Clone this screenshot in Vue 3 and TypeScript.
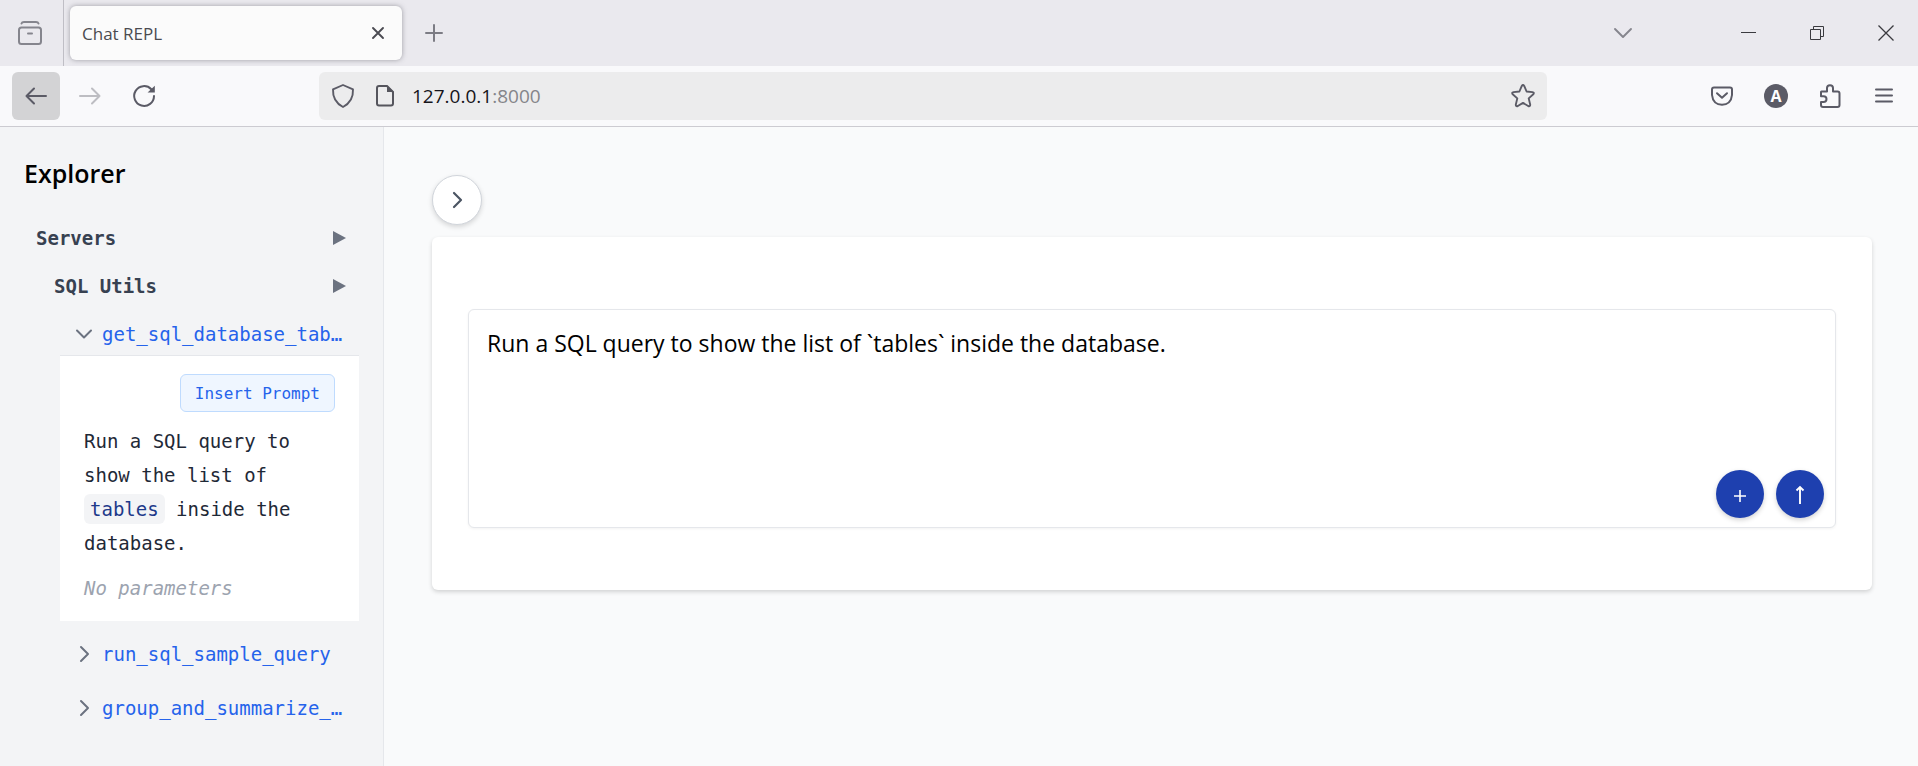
<script setup lang="ts">
import { ref } from 'vue'

interface Tool {
  name: string
  open: boolean
}

const promptText = 'Run a SQL query to show the list of `tables` inside the database.'
const draft = ref<string>(promptText)
const tools = ref<Tool[]>([
  { name: 'get_sql_database_tab…', open: true },
  { name: 'run_sql_sample_query', open: false },
  { name: 'group_and_summarize_…', open: false },
])

function insertPrompt(): void {
  draft.value = promptText
}
</script>

<template>
  <div class="window">
    <header class="tabs">
      <button class="recent" type="button" aria-label="Recent browsing">
        <svg width="26" height="26" viewBox="0 0 26 26" fill="none" stroke="#85858d" stroke-width="2" stroke-linecap="round">
          <path d="M4.5 3.5Q5 2 7 2H19Q21 2 21.500 3.500" />
          <rect x="2" y="7.500" width="22" height="16.500" rx="2.500" />
          <path d="M11 13.500H15" />
        </svg>
      </button>
      <div class="tab">
        <span>Chat REPL</span>
        <button type="button" aria-label="Close tab">
          <svg width="12" height="12" viewBox="0 0 12 12" fill="none" stroke="#4b4b52" stroke-width="1.900" stroke-linecap="round">
            <path d="M1 1L11 11M11 1L1 11" />
          </svg>
        </button>
      </div>
      <button class="new-tab" type="button" aria-label="New tab">
        <svg width="18" height="18" viewBox="0 0 18 18" fill="none" stroke="#7c7c84" stroke-width="2" stroke-linecap="round">
          <path d="M9 1V17M1 9H17" />
        </svg>
      </button>
      <button class="all-tabs" type="button" aria-label="List all tabs">
        <svg width="18" height="10" viewBox="0 0 18 10" fill="none" stroke="#85858d" stroke-width="1.900" stroke-linecap="round" stroke-linejoin="round">
          <path d="M1 1L9 9L17 1" />
        </svg>
      </button>
      <button class="control" type="button" aria-label="Minimize">
        <svg width="15" height="16" viewBox="0 0 15 16" fill="none" stroke="#3a3a3f" stroke-width="1"><path d="M0 7.500H15" /></svg>
      </button>
      <button class="control" type="button" aria-label="Restore">
        <svg width="15" height="16" viewBox="0 0 15 16" fill="none" stroke="#3a3a3f" stroke-width="1">
          <path d="M0.500 4.500H10.500V14.500H0.500ZM3.500 4.500V1.500H13.500V11.500H10.500" />
        </svg>
      </button>
      <button class="control" type="button" aria-label="Close window">
        <svg width="16" height="16" viewBox="0 0 16 16" fill="none" stroke="#3a3a3f" stroke-width="1.300"><path d="M0.500 0.500L15.500 15.500M15.500 0.500L0.500 15.500" /></svg>
      </button>
    </header>

    <nav class="toolbar" aria-label="Browser">
      <button class="tool back" type="button" aria-label="Back">
        <svg width="24" height="24" viewBox="0 0 24 24" fill="none" stroke="#5b5b66" stroke-width="2" stroke-linecap="round" stroke-linejoin="round">
          <path d="M22 12H2.500M10 4.500L2.500 12L10 19.500" />
        </svg>
      </button>
      <button class="tool" type="button" aria-label="Forward" disabled>
        <svg width="24" height="24" viewBox="0 0 24 24" fill="none" stroke="#bdbdc2" stroke-width="2" stroke-linecap="round" stroke-linejoin="round">
          <path d="M2 12H21.500M14 4.500L21.500 12L14 19.500" />
        </svg>
      </button>
      <button class="tool" type="button" aria-label="Reload">
        <svg width="24" height="24" viewBox="0 0 24 24" fill="none" stroke="#5b5b66" stroke-width="2" stroke-linecap="round">
          <path d="M22 12A9.900 9.900 0 1 1 19.300 5.200" />
          <path d="M22.800 1.800V8.500H15.600Z" fill="#5b5b66" stroke="none" />
        </svg>
      </button>
      <div class="spring"></div>
      <div class="address">
        <svg width="24" height="24" viewBox="0 0 24 24" fill="none" stroke="#5b5b66" stroke-width="1.900" stroke-linejoin="round">
          <path d="M12 1L22 5.300Q22.600 17.500 12 23Q1.400 17.500 2 5.300Z" />
        </svg>
        <svg width="20" height="24" viewBox="0 0 20 24" fill="none" stroke="#55555d" stroke-width="2" stroke-linejoin="round">
          <path d="M12 2H4Q2 2 2 4V19.500Q2 21.500 4 21.500H16Q18 21.500 18 19.500V8Z" />
          <path d="M12 1.500L18.800 8H12Z" fill="#55555d" stroke="none" />
        </svg>
        <div class="url">127.0.0.1<span>:8000</span></div>
        <button type="button" aria-label="Bookmark this page">
          <svg width="24" height="24" viewBox="0 0 24 24" fill="none" stroke="#5b5b66" stroke-width="1.900" stroke-linejoin="round">
            <path d="M10.800 1.900Q12 0 13.200 1.900L15.600 7.500L21.500 8.100Q23.700 8.500 22.300 10.300L17.700 14.400L19.200 20.600Q19.300 22.800 17.200 22L12 18.900L6.800 22Q4.700 22.800 4.800 20.600L6.300 14.400L1.700 10.300Q0.300 8.500 2.500 8.100L8.400 7.500Z" />
          </svg>
        </button>
      </div>
      <div class="spring"></div>
      <button class="tool" type="button" aria-label="Save to Pocket">
        <svg width="24" height="24" viewBox="0 0 24 24" fill="none" stroke="#5b5b66" stroke-width="2" stroke-linecap="round" stroke-linejoin="round">
          <path d="M4 3.500H20Q22 3.500 22 5.500V11Q21 20.500 12 20.800Q3 20.500 2 11V5.500Q2 3.500 4 3.500Z" />
          <path d="M7 9.200L12 13.800L17 9.200" />
        </svg>
      </button>
      <button class="tool" type="button" aria-label="Account">
        <svg width="24" height="24" viewBox="0 0 24 24">
          <circle cx="12" cy="12" r="12" fill="#5b5b66" />
          <text x="12" y="18" text-anchor="middle" fill="#fff" font-size="16" font-weight="700">A</text>
        </svg>
      </button>
      <button class="tool" type="button" aria-label="Extensions">
        <svg width="24" height="24" viewBox="0 0 24 24" fill="none" stroke="#5b5b66" stroke-width="2" stroke-linejoin="round">
          <path d="M3.500 7.500H9V4Q9 1.200 12 1.200Q15 1.200 15 4V7.500H19.500Q21.500 7.500 21.500 9.500V21Q21.500 23 19.500 23H5Q3 23 3 21V18H5.500Q8.500 18 8.500 15Q8.500 12.200 5.500 12.200H3V8Z" />
        </svg>
      </button>
      <button class="tool" type="button" aria-label="Menu">
        <svg width="24" height="24" viewBox="0 0 24 24" fill="none" stroke="#5b5b66" stroke-width="2" stroke-linecap="round">
          <path d="M4 5.500H20M4 11.500H20M4 17.500H20" />
        </svg>
      </button>
    </nav>

    <div class="page">
      <aside class="sidebar">
        <h1>Explorer</h1>
        <button class="group" type="button">
          Servers
          <svg width="13" height="14" viewBox="0 0 13 14"><path d="M0 0L13 7L0 14Z" fill="#6b7280" /></svg>
        </button>
        <button class="group nested" type="button">
          SQL Utils
          <svg width="13" height="14" viewBox="0 0 13 14"><path d="M0 0L13 7L0 14Z" fill="#6b7280" /></svg>
        </button>
        <ul class="tools">
          <li v-for="tool in tools" :key="tool.name">
            <button class="entry" type="button" :aria-expanded="tool.open" @click="tool.open = !tool.open">
              <svg width="18" height="18" viewBox="0 0 18 18" fill="none" stroke="#6b7280" stroke-width="2" stroke-linecap="round" stroke-linejoin="round">
                <path v-if="tool.open" d="M2 5.500L9 12.500L16 5.500" />
                <path v-else d="M6 2L13 9L6 16" />
              </svg>
              <span>{{ tool.name }}</span>
            </button>
            <section v-if="tool.open" class="detail">
              <button class="insert" type="button" @click="insertPrompt">Insert Prompt</button>
              <p class="description">Run a SQL query to show the list of <code>tables</code> inside the database.</p>
              <p class="empty">No parameters</p>
            </section>
          </li>
        </ul>
      </aside>

      <main>
        <button class="toggle" type="button" aria-label="Toggle sidebar">
          <svg width="18" height="18" viewBox="0 0 18 18" fill="none" stroke="#4b5563" stroke-width="2.200" stroke-linecap="round" stroke-linejoin="round">
            <path d="M6 2L13 9L6 16" />
          </svg>
        </button>
        <form class="card" @submit.prevent>
          <div class="composer">
            <textarea v-model="draft" aria-label="Message" spellcheck="false"></textarea>
            <div class="actions">
              <button type="button" aria-label="Add">
                <svg width="18" height="18" viewBox="0 0 18 18" fill="none" stroke="#fff" stroke-width="1.600"><path d="M3 11H15M9 5V17" /></svg>
              </button>
              <button type="submit" aria-label="Send">
                <svg width="18" height="18" viewBox="0 0 18 18" fill="none" stroke="#fff" stroke-width="1.900"><path d="M9 2.500V19M5.500 5.500L9 2L12.500 5.500" /></svg>
              </button>
            </div>
          </div>
        </form>
      </main>
    </div>
  </div>
</template>

<style>
body {
  margin: 0;
}
</style>

<style scoped>
* {
  box-sizing: border-box;
}

.window {
  display: flex;
  flex-direction: column;
  min-height: 100vh;
  font-family: "Open Sans", "Noto Sans", sans-serif;
  background: #f9fafb;
}

button {
  display: flex;
  align-items: center;
  justify-content: center;
  flex: none;
  margin: 0;
  padding: 0;
  border: 0;
  background: none;
  font: inherit;
  color: inherit;
}

svg {
  display: block;
  flex: none;
  overflow: visible;
}

.tabs {
  display: flex;
  align-items: center;
  height: 66px;
  background: #eae9ee;
}

.recent {
  width: 64px;
  height: 66px;
  padding-right: 4px;
  border-right: 1px solid #bfbec5;
}

.tab {
  display: flex;
  align-items: center;
  justify-content: space-between;
  width: 332px;
  height: 54px;
  margin-left: 6px;
  padding: 0 18px 0 12px;
  border-radius: 6px;
  background: #fbfbfb;
  box-shadow: 0 0 5px rgba(80, 80, 90, 0.5);
  color: #4b4b50;
  font-size: 17px;
}

.new-tab {
  width: 48px;
  height: 48px;
  margin-left: 8px;
}

.all-tabs {
  width: 48px;
  height: 48px;
  margin-right: 67px;
  margin-left: auto;
}

.control {
  width: 69px;
  height: 66px;
}

.control:last-child {
  width: 66px;
  padding-left: 2px;
}

.toolbar {
  display: flex;
  align-items: center;
  gap: 6px;
  height: 61px;
  padding: 0 10px 0 12px;
  border-bottom: 1px solid #cccbd1;
  background: #f9f9fb;
}

.tool {
  width: 48px;
  height: 48px;
  border-radius: 6px;
}

.back {
  background: #d3d3d5;
}

.spring {
  flex: 139 1 0;
}

.address {
  display: flex;
  flex: 1204 1 0;
  align-items: center;
  height: 48px;
  padding: 0 12px;
  border-radius: 6px;
  background: #ececed;
}

.address svg + svg {
  margin-left: 20px;
}

.url {
  flex: 1;
  margin-left: 17px;
  color: #15141a;
  font-size: 19px;
}

.url span {
  color: #85858a;
}

.page {
  display: flex;
  flex: 1;
}

.sidebar {
  flex: none;
  width: 384px;
  padding: 24px;
  border-right: 1px solid #e5e7eb;
  background: #f3f4f6;
  font-family: "DejaVu Sans Mono", monospace;
  font-size: 19px;
}

h1 {
  margin: 0 0 18px;
  color: #000;
  font-family: "Open Sans", "Noto Sans", sans-serif;
  font-size: 25px;
  font-weight: 600;
  line-height: 45px;
}

.group {
  justify-content: space-between;
  width: 100%;
  height: 48px;
  padding: 0 13px 0 12px;
  color: #374151;
  font-weight: 700;
}

.nested {
  padding-left: 30px;
}

.tools {
  display: flex;
  flex-direction: column;
  gap: 12px;
  margin: 3px 0 0 36px;
  padding: 0;
  list-style: none;
}

.entry {
  justify-content: flex-start;
  gap: 9px;
  width: 100%;
  height: 42px;
  padding-left: 15px;
  color: #2563eb;
  white-space: nowrap;
}

.detail {
  padding: 18px 24px;
  border-top: 1px solid #e5e7eb;
  background: #fff;
}

.insert {
  height: 38px;
  margin-left: auto;
  padding: 0 14px;
  border: 1px solid #bfdbfe;
  border-radius: 6px;
  background: #eff6ff;
  color: #2563eb;
  font-size: 16px;
}

.description {
  margin: 12px 0;
  color: #1f2937;
  line-height: 34px;
}

code {
  padding: 4px 6px;
  border-radius: 6px;
  background: #f3f4f6;
  color: #1e3a8a;
  font-family: inherit;
}

.empty {
  margin: 0;
  padding-top: 1px;
  color: #9ca3af;
  font-style: italic;
  line-height: 30px;
}

main {
  flex: 1;
  min-width: 0;
  padding: 48px 46px 48px 48px;
}

.toggle {
  width: 50px;
  height: 50px;
  border: 1px solid #d1d5db;
  border-radius: 50%;
  background: #fff;
  box-shadow: 0 2px 5px rgba(0, 0, 0, 0.15);
}

.card {
  margin-top: 12px;
  padding: 72px 36px 62px;
  border-radius: 6px;
  background: #fff;
  box-shadow: 0 2px 4px rgba(0, 0, 0, 0.16);
}

.composer {
  position: relative;
}

textarea {
  display: block;
  width: 100%;
  height: 219px;
  padding: 15px 18px;
  border: 1px solid #e5e7eb;
  border-radius: 6px;
  outline: none;
  background: #fff;
  box-shadow: 0 1px 3px rgba(0, 0, 0, 0.05);
  resize: none;
  color: #000;
  font-family: "Open Sans", "Noto Sans", sans-serif;
  font-size: 23px;
  line-height: 36px;
}

.actions {
  position: absolute;
  right: 12px;
  bottom: 10px;
  display: flex;
  gap: 12px;
}

.actions button {
  width: 48px;
  height: 48px;
  border-radius: 50%;
  background: #1e40af;
  box-shadow: 0 2px 5px rgba(0, 0, 0, 0.18);
}
</style>
